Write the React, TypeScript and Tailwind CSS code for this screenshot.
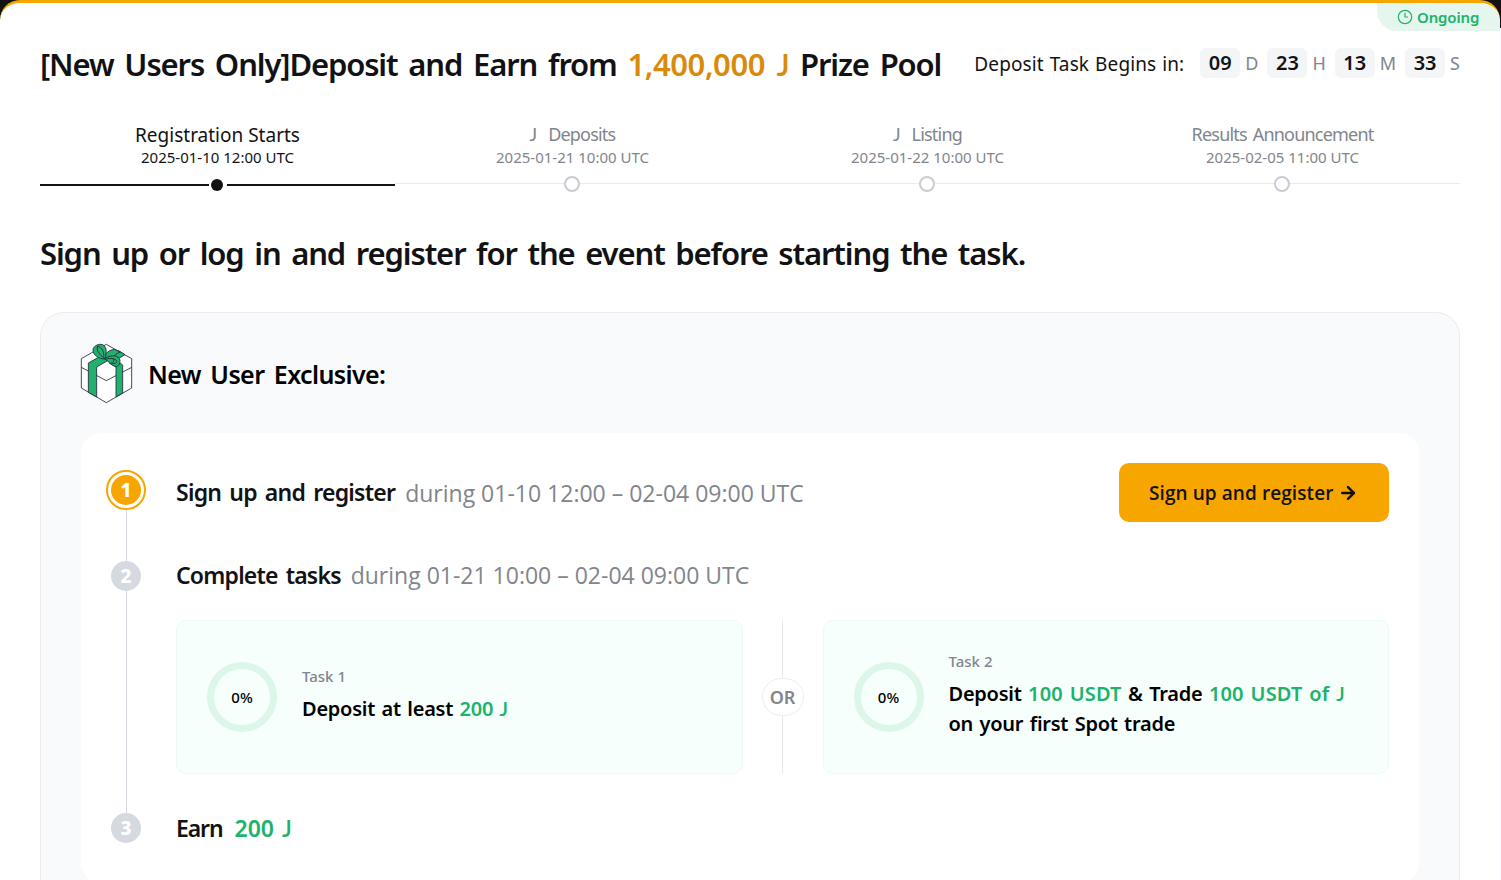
import type { ReactNode } from "react";
import { ArrowRight, Clock3 } from "lucide-react";

type Milestone = {
  title: ReactNode;
  date: string;
  active?: boolean;
};

// The token symbol sits on the baseline, so it is set in Lato
function Token() {
  return <span className="font-['Lato',sans-serif]">J</span>;
}

const milestones: Milestone[] = [
  { title: "Registration Starts", date: "2025-01-10 12:00 UTC", active: true },
  { title: <><Token />{"  "}Deposits</>, date: "2025-01-21 10:00 UTC" },
  { title: <><Token />{"  "}Listing</>, date: "2025-01-22 10:00 UTC" },
  { title: "Results Announcement", date: "2025-02-05 11:00 UTC" },
];

const countdown = [
  { value: "09", unit: "D" },
  { value: "23", unit: "H" },
  { value: "13", unit: "M" },
  { value: "33", unit: "S" },
];

function GiftIcon() {
  return (
    <svg className="-ml-px shrink-0" width="54" height="62" viewBox="30 21 162 186" fill="none" stroke="#25233a" strokeWidth="2.5" strokeLinejoin="round">
      <path d="M109 28 185 71v88l-76 44-75-44V71z" fill="#fff" />
      <path d="M34 97l75 40 76-40" />
      <path d="M55 84 96 61l24 12-40 23v90l-25-14z" fill="#20b26c" />
      <path d="M128 57 146 47l19 12-20 12z" fill="#20b26c" />
      <path d="M118 84l20 12v90l20-12V90l-8-6-16-9z" fill="#20b26c" />
      <path d="M100 70c4-15 20-26 33-27l18 8c-14 4-19 15-28 18z" fill="#20b26c" />
      <path d="M104 72C86 72 69 60 69 45c0-10 13-18 24-17 16 2 20 21 11 44z" fill="#20b26c" />
      <path d="M103 70C91 61 77 47 83 33M101 65c2-15-5-27-18-32" />
      <path d="M103 71c14-10 38-12 45 0 6 11-2 25-12 23-14-2-19-16-33-23z" fill="#20b26c" />
      <path d="M105 73c16-5 33-3 35 6 1 8-10 9-16 3M128 70c6 6 3 14-4 15" />
    </svg>
  );
}

function Timeline() {
  return (
    <div className="mt-[39px] grid grid-cols-4">
      {milestones.map((item) => (
        <div
          key={item.date}
          className={`flex flex-col items-center whitespace-pre ${item.active ? "text-[#121214]" : "text-[#81858c]"}`}
        >
          <div
            className={
              item.active
                ? "h-6 text-[19px] leading-[26px]"
                : "h-6 text-[18px] leading-[25px] tracking-[-0.8px] [word-spacing:2px]"
            }
          >
            {item.title}
          </div>
          <div className="h-[22px] text-[15px] leading-[22px]">{item.date}</div>
          <div className="mt-2 flex h-4 w-full items-center">
            <div className={item.active ? "mt-0.5 h-0.5 flex-1 bg-[#121214]" : "-mt-px h-px flex-1 bg-[#e8eaed]"} />
            {item.active ? (
              <div className="mt-0.5 mr-1 ml-0.5 size-3 rounded-full bg-[#121214]" />
            ) : (
              <div className="-ml-0.5 size-4 rounded-full border-2 border-[#c9ccd2] bg-white" />
            )}
            <div className={item.active ? "mt-0.5 h-0.5 flex-1 bg-[#121214]" : "-mt-px h-px flex-1 bg-[#e8eaed]"} />
          </div>
        </div>
      ))}
    </div>
  );
}

function Progress() {
  return (
    <div className="flex size-[70px] shrink-0 items-center justify-center rounded-full border-[7px] border-[#dcf6e9] text-[15px] font-medium text-black">
      0%
    </div>
  );
}

function StepBadge({ step }: { step: number }) {
  return (
    <div className="flex size-[30px] shrink-0 items-center justify-center rounded-full bg-[#d5dae0] pt-px text-[19px] font-extrabold text-white">
      {step}
    </div>
  );
}

function TaskCard({ label, children }: { label: string; children: ReactNode }) {
  return (
    <div className="flex flex-1 items-center gap-[25px] rounded-[10px] border border-[#ecfaf4] bg-[#f6fffc] pl-[30px]">
      <Progress />
      <div className="pb-[7px]">
        <div className="h-[30px] text-[15px] leading-[26px] font-medium text-[#81858c]">{label}</div>
        <div className="text-[20px] leading-[30px] font-semibold tracking-[-0.25px] text-black [word-spacing:1.5px]">{children}</div>
      </div>
    </div>
  );
}

export default function App() {
  return (
    <div className="flex h-[880px] w-[1501px] overflow-hidden bg-[linear-gradient(#121214_28px,#f7f8fc_28px)] font-['Noto_Sans',sans-serif] text-[#121214]">
      <main className="relative h-[900px] w-[1500px] shrink-0 rounded-t-[20px] border-t-[3px] border-[#f7a600] bg-white px-10">
        <div className="absolute top-0 right-0 flex h-7 w-[123px] items-center gap-1 rounded-tr-[20px] rounded-bl-[20px] bg-[#e4f6ed] pl-5 text-[#20b26c]">
          <Clock3 size={16} strokeWidth={1.8} />
          <span className="text-[15px] font-semibold tracking-[-0.15px]">Ongoing</span>
        </div>

        <header className="flex h-[80px] items-end justify-between whitespace-nowrap">
          <h1 className="mb-px text-[31px] leading-[36px] font-semibold tracking-[-1.13px] [word-spacing:3.9px]">
            [New Users Only]Deposit and Earn from{" "}
            <span className="tracking-[-0.45px] text-[#d98a0b]">
              1,400,000 <Token />
            </span>{" "}
            Prize Pool
          </h1>
          <div className="mb-[5px] flex h-[30px] items-center">
            <span className="mr-4 pt-0.5 text-[19px] tracking-[0.1px] [word-spacing:1px]">Deposit Task Begins in:</span>
            {countdown.map((item) => (
              <div key={item.unit} className="mr-[9px] flex items-center last:mr-0">
                <span className="flex h-[30px] w-10 items-center justify-center rounded-md bg-[#f3f5f7] text-[20px] font-semibold">
                  {item.value}
                </span>
                <span className="pl-[5px] text-[18px] text-[#81858c]">{item.unit}</span>
              </div>
            ))}
          </div>
        </header>

        <Timeline />

        <h2 className="mt-[42px] h-10 text-[31px] leading-[38px] font-semibold tracking-[-1.1px] whitespace-nowrap [word-spacing:3.6px]">
          Sign up or log in and register for the event before starting the task.
        </h2>

        <section className="mt-[38px] h-[640px] rounded-[24px] border border-[#eaecef] bg-[#f9fafc] px-10">
          <div className="flex h-[120px] items-center gap-[14px]">
            <GiftIcon />
            <h3 className="pt-[3px] text-[25px] font-semibold tracking-[-0.6px] text-black [word-spacing:3.5px]">New User Exclusive:</h3>
          </div>

          <div className="flex h-[450px] rounded-[20px] bg-white pr-[30px] pl-[25px]">
            <div className="flex w-10 shrink-0 flex-col items-center pt-[37px]">
              <div className="flex size-10 shrink-0 items-center justify-center rounded-full border-2 border-[#f7a600]">
                <div className="flex size-[30px] items-center justify-center rounded-full bg-[#f7a600] pt-px text-[19px] font-extrabold text-white">1</div>
              </div>
              <div className="h-[51px] w-px bg-[#d5dae0]" />
              <StepBadge step={2} />
              <div className="h-[222px] w-px bg-[#d5dae0]" />
              <StepBadge step={3} />
            </div>

            <div className="ml-[30px] flex-1">
              <div className="mt-[30px] flex h-[59px] items-center whitespace-nowrap">
                <span className="text-[23px] font-semibold tracking-[-0.75px] [word-spacing:2.8px]">Sign up and register</span>
                <span className="ml-2.5 pt-px font-['Open_Sans',sans-serif] text-[23px] text-[#81858c]">during 01-10 12:00 – 02-04 09:00 UTC</span>
                <button className="ml-auto flex h-[59px] w-[270px] items-center gap-[5px] rounded-[10px] bg-[#f7a600] pl-[30px] font-['Open_Sans',sans-serif] text-[19px] font-semibold tracking-[0.08px]">
                  <span className="pt-0.5">Sign up and register</span>
                  <ArrowRight size={20} strokeWidth={3} />
                </button>
              </div>

              <div className="mt-[33px] flex h-10 items-center whitespace-nowrap">
                <span className="text-[23px] font-semibold tracking-[-0.8px] [word-spacing:2.8px]">Complete tasks</span>
                <span className="ml-2.5 font-['Open_Sans',sans-serif] text-[23px] text-[#81858c]">during 01-21 10:00 – 02-04 09:00 UTC</span>
              </div>

              <div className="mt-[25px] flex h-[154px] whitespace-nowrap">
                <TaskCard label="Task 1">
                  Deposit at least{" "}
                  <span className="text-[#20b26c]">
                    200 <Token />
                  </span>
                </TaskCard>
                <div className="flex w-20 flex-col items-center">
                  <div className="w-px flex-1 bg-[#e6e8ee]" />
                  <div className="flex h-[38px] w-[42px] items-center justify-center rounded-full border border-[#eceef3] text-[18px] font-semibold text-[#81858c]">
                    OR
                  </div>
                  <div className="w-px flex-1 bg-[#e6e8ee]" />
                </div>
                <TaskCard label="Task 2">
                  Deposit <span className="tracking-[0.15px] text-[#20b26c]">100 USDT</span> & Trade{" "}
                  <span className="tracking-[0.15px] text-[#20b26c]">
                    100 USDT of <Token />
                  </span>
                  <br />
                  on your first Spot trade
                </TaskCard>
              </div>

              <div className="mt-[34px] flex h-10 items-center text-[23px] font-semibold">
                <span className="tracking-[-1.1px]">Earn</span>
                <span className="ml-3 text-[#20b26c] [word-spacing:2px]">
                  200 <Token />
                </span>
              </div>
            </div>
          </div>
        </section>
      </main>
    </div>
  );
}
